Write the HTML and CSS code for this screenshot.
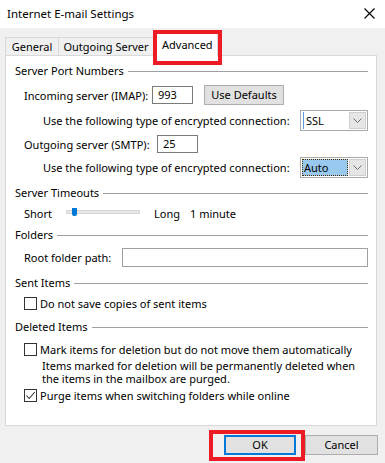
FILE: index.html
```html
<!DOCTYPE html>
<html>
<head>
<meta charset="utf-8">
<link rel="stylesheet" href="styles.css">
</head>
<body>
<div class="dialog">
  <div class="titlebar">
    <span class="title">Internet E-mail Settings</span>
    <svg class="close" width="11" height="11" viewBox="0 0 11 11"><path d="M0.5 0.5 L10.5 10.5 M10.5 0.5 L0.5 10.5" stroke="#000" stroke-width="1.1" fill="none"/></svg>
  </div>
  <div class="tabs">
    <div class="tab tab-general">General</div>
    <div class="tab tab-outgoing">Outgoing Server</div>
    <div class="tab tab-active">Advanced<span class="mark mark-tab"></span></div>
  </div>
  <div class="panel">
    <div class="group g1"><span>Server Port Numbers</span><i class="rule"></i></div>
    <div class="row r-in">
      <span class="lbl port-lbl">Incoming server (IMAP):</span>
      <div class="textbox port port-in">993</div>
      <div class="btn defaults">Use Defaults</div>
    </div>
    <div class="row r-enc1">
      <span class="enc-lbl">Use the following type of encrypted connection:</span>
      <div class="combo"><span class="combo-text ssl">SSL</span><span class="arrow"><svg width="9" height="5" viewBox="0 0 9 5"><path d="M0.5 0.5 L4.5 4.5 L8.5 0.5" stroke="#6d6d6d" fill="none"/></svg></span></div>
    </div>
    <div class="row r-out">
      <span class="lbl port-lbl-out">Outgoing server (SMTP):</span>
      <div class="textbox port">25</div>
    </div>
    <div class="row r-enc2">
      <span class="enc-lbl">Use the following type of encrypted connection:</span>
      <div class="combo"><span class="combo-text sel">Auto</span><span class="arrow"><svg width="9" height="5" viewBox="0 0 9 5"><path d="M0.5 0.5 L4.5 4.5 L8.5 0.5" stroke="#6d6d6d" fill="none"/></svg></span></div>
    </div>
    <div class="group g2"><span>Server Timeouts</span><i class="rule"></i></div>
    <div class="row r-slider">
      <span class="lbl">Short</span>
      <div class="slider"><span class="track"></span><span class="thumb"></span></div>
      <span class="long">Long</span>
      <span class="minute">1 minute</span>
    </div>
    <div class="group g3"><span>Folders</span><i class="rule"></i></div>
    <div class="row r-root">
      <span class="lbl root-lbl">Root folder path:</span>
      <div class="textbox root"></div>
    </div>
    <div class="group g4"><span>Sent Items</span><i class="rule"></i></div>
    <div class="row r-cb1">
      <span class="check"></span><span class="cb-text">Do not save copies of sent items</span>
    </div>
    <div class="group g5"><span>Deleted Items</span><i class="rule"></i></div>
    <div class="row r-cb2">
      <span class="check"></span><span class="cb-text">Mark items for deletion but do not move them automatically</span>
    </div>
    <div class="note"><div class="note-line">Items marked for deletion will be permanently deleted when</div><div class="note-line">the items in the mailbox are purged.</div></div>
    <div class="row r-cb3">
      <span class="check checked"><svg width="11" height="11" viewBox="0 0 11 11"><path d="M1.5 5.5 L4.2 8.5 L9.8 2" stroke="#333" stroke-width="1.1" fill="none"/></svg></span><span class="cb-text">Purge items when switching folders while online</span>
    </div>
  </div>
  <div class="footer">
    <div class="btn ok">OK<span class="mark mark-ok"></span></div>
    <div class="btn cancel">Cancel</div>
  </div>
</div>
</body>
</html>
```

FILE: styles.css
```css
* { box-sizing: border-box; }
html, body { margin: 0; padding: 0; }
body {
  width: 385px;
  height: 463px;
  overflow: hidden;
  background: #f0f0f0;
  font-family: "Noto Sans", "Open Sans", sans-serif;
  font-size: 11px;
  color: #000;
  white-space: nowrap;
}
.dialog { width: 385px; height: 463px; }

.titlebar {
  height: 28px;
  background: #fff;
  display: flex;
  align-items: center;
  padding: 0 10px 0 7px;
}
.title { font-size: 11.5px; line-height: 14px; flex: 1; }
.close { margin-top: -2px; }

.tabs {
  height: 27px;
  display: flex;
  align-items: flex-end;
  padding-left: 5px;
}
.tab {
  height: 18px;
  border: 1px solid #d9d9d9;
  border-bottom: none;
  line-height: 18px;
  text-align: center;
  background: #f0f0f0;
}
.tab-general { width: 54px; }
.tab-outgoing { width: 96px; margin-left: -1px; }
.tab-active {
  position: relative;
  width: 65px;
  height: 23px;
  margin-left: -1px;
  margin-bottom: -1px;
  background: #fff;
  line-height: 21px;
  text-align: left;
  padding-left: 8px;
  z-index: 1;
}
.mark {
  position: absolute;
  border: 4px solid #ed1c24;
}
.mark-tab { left: -1px; top: -4px; width: 69px; height: 35px; }

.panel {
  margin-left: 5px;
  width: 372px;
  height: 371px;
  background: #fff;
  border: 1px solid #d9d9d9;
  padding: 0 8px 0 9px;
  display: flex;
  flex-direction: column;
}

.group {
  height: 16px;
  display: flex;
  align-items: center;
  gap: 4px;
  line-height: 16px;
}
.rule { flex: 1; height: 1px; background: #a0a0a0; margin-top: 1px; }
.g1 { margin-top: 7px; }
.g2 { margin-top: 7px; }
.g3 { margin-top: 6px; }
.g4 { margin-top: 8px; }
.g5 { margin-top: 8px; }

.row { display: flex; align-items: center; }
.lbl { margin-left: 9px; }
.r-in { height: 20px; margin-top: 6px; }
.port-lbl { width: 128px; }
.port-lbl-out { width: 133px; }
.textbox {
  border: 1px solid #7a7a7a;
  background: #fff;
  height: 18px;
  line-height: 16px;
  padding-left: 5px;
}
.port { width: 41px; }
.btn {
  height: 20px;
  background: #e1e1e1;
  border: 1px solid #adadad;
  text-align: center;
  line-height: 18px;
}
.defaults { width: 80px; margin-left: 11px; }

.r-enc1 { height: 21px; margin-top: 5px; }
.r-out { height: 20px; margin-top: 3px; }
.r-enc2 { height: 21px; margin-top: 3px; }
.enc-lbl { margin-left: 28px; }
.combo {
  margin-left: auto;
  width: 68px;
  height: 21px;
  border: 1px solid #a9a9a9;
  display: flex;
  align-items: stretch;
  padding: 1px;
  background: #fff;
}
.combo-text { flex: 1; line-height: 17px; padding-left: 3px; }
.ssl { border-left: 1px solid #5a9bd5; margin-left: 1px; padding-left: 2px; }
.sel {
  background: #99c9ef;
  border: 1px dotted #4a3000;
  margin-right: 1px;
  padding-left: 1px;
  line-height: 15px;
}
.arrow {
  width: 17px;
  background: #e6e6e6;
  border: 1px solid #cfcfcf;
  display: flex;
  align-items: center;
  justify-content: center;
}

.r-slider { height: 16px; margin-top: 4px; }
.slider { position: relative; width: 74px; height: 16px; margin-left: 14px; }
.track {
  position: absolute;
  left: 0; right: 0; top: 5px;
  height: 4px;
  background: #e7e7e7;
  border: 1px solid #d6d6d6;
}
.thumb {
  position: absolute;
  left: 6px; top: 3px;
  width: 5px; height: 8px;
  background: #0078d7;
  border-radius: 0 0 2px 2px;
}
.long { margin-left: 14px; }
.minute { margin-left: 10px; }

.r-root { height: 19px; margin-top: 5px; }
.root-lbl { width: 98px; }
.root { flex: 1; height: 19px; border-color: #a0a0a0; }

.r-cb1 { height: 15px; margin-top: 5px; }
.r-cb2 { height: 15px; margin-top: 7px; }
.r-cb3 { height: 15px; margin-top: 3px; }
.check {
  margin-left: 9px;
  width: 13px; height: 13px;
  border: 1px solid #333;
  background: #fff;
  display: flex;
  align-items: center;
  justify-content: center;
  flex: none;
}
.cb-text { margin-left: 3px; }
.note { margin-top: 2px; margin-left: 27px; height: 26px; display: flex; flex-direction: column; }
.note-line { height: 13px; line-height: 13px; }

.footer {
  margin-top: 9px;
  display: flex;
  justify-content: flex-end;
  gap: 9px;
  padding-right: 7px;
}
.ok {
  position: relative;
  width: 72px;
  border: 2px solid #0078d7;
  line-height: 16px;
}
.cancel { width: 73px; }
.mark-ok { left: -17px; top: -7px; width: 96px; height: 31px; }
```
